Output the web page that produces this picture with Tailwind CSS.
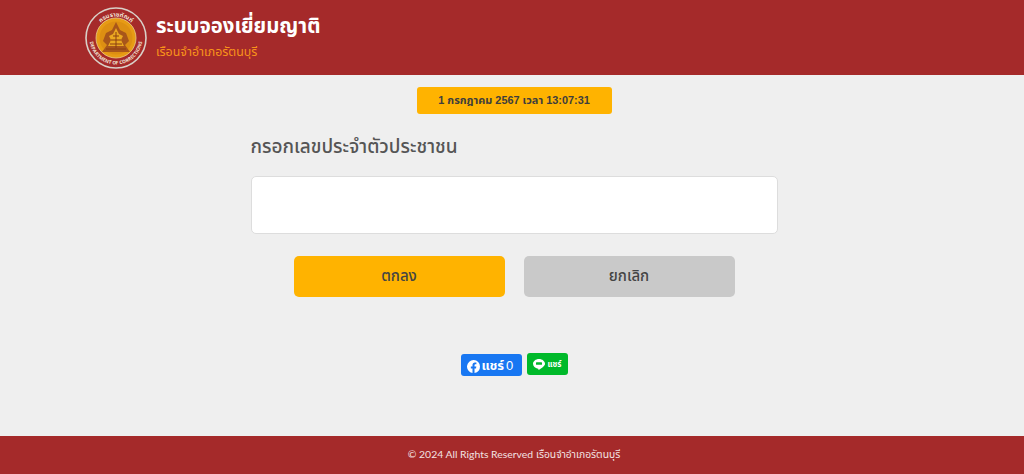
<!DOCTYPE html>
<html lang="th">
<head>
    <meta charset="UTF-8">
    <meta name="viewport" content="width=device-width, initial-scale=1.0">
    <script src="https://cdn.jsdelivr.net/npm/@tailwindcss/browser@4"></script>
    <title>ระบบจองเยี่ยมญาติ</title>
</head>
<body class="font-['Open_Sans','Noto_Sans_Thai','Noto_Sans',sans-serif]">
<div class="h-screen flex flex-col bg-[#efefef] overflow-hidden">

    <!-- header -->
    <header class="h-[75px] shrink-0 bg-[#a52a2a] pl-[85px] flex items-start">
        <svg class="w-[62px] h-[62px] mt-[7px] shrink-0" viewBox="0 0 62 62">
            <defs>
                <path id="seal-top" d="M 9.500 31 A 21.500 21.500 0 0 1 52.500 31"></path>
                <path id="seal-bottom" d="M 4.500 31 A 26.500 26.500 0 0 0 57.500 31"></path>
            </defs>
            <circle cx="31" cy="31" r="30" fill="#a52a2a" stroke="#d9d0c8" stroke-width="1.600"></circle>
            <circle cx="31" cy="31" r="20" fill="#e79b14" stroke="#e8c98a" stroke-width="0.800"></circle>
            <circle cx="31" cy="31" r="16.500" fill="#dd8f12"></circle>
            <path d="M31 15 L35 23 L41 26 L44 34 L40 38 L45 45 L17 45 L22 38 L18 34 L21 26 L27 23 Z" fill="#a8561a"></path>
            <path d="M31 21 L34 27 L38 29 L36 33 L39 39 L23 39 L26 33 L24 29 L28 27 Z" fill="#eaa821"></path>
            <path d="M28 29 L34 29 M26 33 L36 33 M25 37 L37 37 M31 25 L31 41 M21 42 L41 42" stroke="#8a3f12" stroke-width="1" fill="none"></path>
            <text font-size="6" font-weight="700" fill="#f1e4d8"><textPath href="#seal-top" startOffset="50%" text-anchor="middle">กรมราชทัณฑ์</textPath></text>
            <text font-size="4.800" font-weight="700" fill="#f1e4d8"><textPath href="#seal-bottom" startOffset="50%" text-anchor="middle">DEPARTMENT OF CORRECTIONS</textPath></text>
        </svg>
        <div class="ml-[9px]">
            <h1 class="text-[20.300px] leading-[30px] mt-[10px] font-bold text-white">ระบบจองเยี่ยมญาติ</h1>
            <p class="text-[12.400px] leading-[18px] mt-[3px] text-[#f8931a]">เรือนจำอำเภอรัตนบุรี</p>
        </div>
    </header>

    <!-- main -->
    <main class="flex-1 flex flex-col items-center pl-[4px]">
        <div class="mt-[12px] w-[195px] h-[27px] bg-[#ffb300] rounded-[3px] flex items-center justify-center text-[10.900px] font-bold text-[#3d3d3d] font-['Liberation_Sans','Noto_Sans_Thai',sans-serif]">1 กรกฎาคม 2567 เวลา 13:07:31</div>

        <div class="w-[527px] mt-[18px]">
            <label for="citizen-id" class="block text-[19px] leading-[28px] font-medium text-[#555]">กรอกเลขประจำตัวประชาชน</label>
            <input id="citizen-id" type="text" class="block w-full h-[58px] mt-[16px] bg-white border border-[#dddddd] rounded-[5px] px-3 focus:outline-none">
        </div>

        <div class="flex gap-[19px] mt-[22px]">
            <button class="w-[211px] h-[41px] bg-[#ffb300] rounded-[5px] text-[15px] font-medium text-[#444] pb-[2px]">ตกลง</button>
            <button class="w-[211px] h-[41px] bg-[#c9c9c9] rounded-[5px] text-[15px] font-medium text-[#444] pb-[2px]">ยกเลิก</button>
        </div>

        <div class="flex items-start gap-[5px] mt-[56px]">
            <a class="w-[61px] h-[22px] mt-px bg-[#1877f2] rounded-[3px] flex items-center pl-[6px] text-white">
                <svg class="w-[13px] h-[13px] mt-[2px]" viewBox="0 0 16 16"><path fill="#fff" d="M16 8.050A8 8 0 1 0 6.750 16v-5.620H4.720V8.050h2.030V6.270c0-2.020 1.190-3.130 3.020-3.130.880 0 1.800.160 1.800.160v1.980h-1.010c-1 0-1.310.620-1.310 1.260v1.510h2.220l-.350 2.330H9.250V16A8.030 8.030 0 0 0 16 8.050z"></path></svg>
                <span class="ml-[2px] text-[13px] font-bold leading-none">แชร์</span>
                <span class="ml-[2px] text-[13px] font-normal leading-none font-['Liberation_Sans',sans-serif]">0</span>
            </a>
            <a class="w-[41px] h-[22px] bg-[#00b92a] rounded-[3px] flex items-center justify-center text-white">
                <svg class="w-[12px] h-[11px]" viewBox="0 0 24 22"><path fill="#fff" d="M12 0C5.400 0 0 4.300 0 9.700c0 4.800 4.300 8.800 10 9.600.900.200.800.500.600 1.700-.100.500.300.900 1 .600 1-.500 7.100-4.300 9.800-7.300C23.200 13.300 24 11.600 24 9.700 24 4.300 18.600 0 12 0z"></path><rect x="6" y="6.500" width="12" height="5" rx="1" fill="#00b92a"></rect></svg>
                <span class="ml-[3px] text-[8px] font-bold leading-none">แชร์</span>
            </a>
        </div>
    </main>

    <!-- footer -->
    <footer class="h-[38px] shrink-0 bg-[#a52a2a] pl-[4px] flex items-center justify-center gap-[3px] text-[10.400px] text-[#f3e3e3] font-['Lato','Noto_Sans_Thai',sans-serif]">
        <span>© 2024 All Rights Reserved</span>
        <span class="text-[10.300px]">เรือนจำอำเภอรัตนบุรี</span>
    </footer>
</div>
</body>
</html>
